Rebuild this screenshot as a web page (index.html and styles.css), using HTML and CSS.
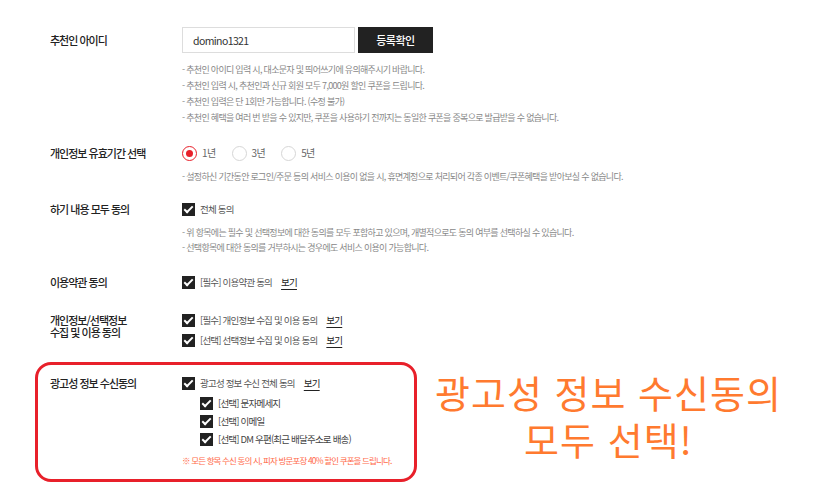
FILE: index.html
```html
<!DOCTYPE html>
<html lang="ko">
<head>
    <meta charset="UTF-8">
    <meta name="viewport" content="width=device-width, initial-scale=1.0">
    <title>회원가입 - 약관 동의</title>
    <link rel="stylesheet" href="styles.css">
</head>
<body>

<div class="join-form">

    <!-- 추천인 -->
    <div class="row row-recommend">
        <div class="row-label">추천인 아이디</div>
        <div class="row-body">
            <div class="id-check">
                <input type="text" class="input-box" value="domino1321">
                <button type="button" class="btn-dark">등록확인</button>
            </div>
            <ul class="notes">
                <li>- 추천인 아이디 입력 시, 대소문자 및 띄어쓰기에 유의해주시기 바랍니다.</li>
                <li>- 추천인 입력 시, 추천인과 신규 회원 모두 7,000원 할인 쿠폰을 드립니다.</li>
                <li>- 추천인 입력은 단 1회만 가능합니다. (수정 불가)</li>
                <li>- 추천인 혜택을 여러 번 받을 수 있지만, 쿠폰을 사용하기 전까지는 동일한 쿠폰을 중복으로 발급받을 수 없습니다.</li>
            </ul>
        </div>
    </div>

    <!-- 유효기간 -->
    <div class="row row-period">
        <div class="row-label">개인정보 유효기간 선택</div>
        <div class="row-body">
            <div class="radio-group">
                <label class="radio"><span class="radio-mark on"></span>1년</label>
                <label class="radio"><span class="radio-mark"></span>3년</label>
                <label class="radio"><span class="radio-mark"></span>5년</label>
            </div>
            <ul class="notes notes-tight">
                <li>- 설정하신 기간동안 로그인/주문 등의 서비스 이용이 없을 시, 휴면계정으로 처리되어 각종 이벤트/쿠폰혜택을 받아보실 수 없습니다.</li>
            </ul>
        </div>
    </div>

    <!-- 전체 동의 -->
    <div class="row row-all">
        <div class="row-label">하기 내용 모두 동의</div>
        <div class="row-body">
            <label class="check"><span class="check-mark"></span>전체 동의</label>
            <ul class="notes notes-tight">
                <li>- 위 항목에는 필수 및 선택정보에 대한 동의를 모두 포함하고 있으며, 개별적으로도 동의 여부를 선택하실 수 있습니다.</li>
                <li>- 선택항목에 대한 동의를 거부하시는 경우에도 서비스 이용이 가능합니다.</li>
            </ul>
        </div>
    </div>

    <!-- 이용약관 -->
    <div class="row row-terms">
        <div class="row-label">이용약관 동의</div>
        <div class="row-body">
            <label class="check"><span class="check-mark"></span>[필수] 이용약관 동의<a href="#" class="view">보기</a></label>
        </div>
    </div>

    <!-- 개인정보 -->
    <div class="row row-privacy">
        <div class="row-label two-line">개인정보/선택정보<br>수집 및 이용 동의</div>
        <div class="row-body">
            <label class="check"><span class="check-mark"></span>[필수] 개인정보 수집 및 이용 동의<a href="#" class="view">보기</a></label>
            <label class="check"><span class="check-mark"></span>[선택] 선택정보 수집 및 이용 동의<a href="#" class="view">보기</a></label>
        </div>
    </div>

    <!-- 광고성 정보 -->
    <div class="ad-wrap">
        <div class="ad-box">
            <div class="row row-ad">
                <div class="row-label">광고성 정보 수신동의</div>
                <div class="row-body">
                    <label class="check"><span class="check-mark"></span>광고성 정보 수신 전체 동의<a href="#" class="view">보기</a></label>
                    <div class="sub-checks">
                        <label class="check sub"><span class="check-mark"></span>[선택] 문자메세지</label>
                        <label class="check sub"><span class="check-mark"></span>[선택] 이메일</label>
                        <label class="check sub"><span class="check-mark"></span>[선택] DM 우편(최근 배달주소로 배송)</label>
                    </div>
                    <p class="coupon-note">※ 모든 항목 수신 동의 시, 피자 방문포장 40% 할인 쿠폰을 드립니다.</p>
                </div>
            </div>
        </div>
        <div class="callout">
            <span class="callout-line">광고성 정보 수신동의</span>
            <span class="callout-line">모두 선택!</span>
        </div>
    </div>

</div>

</body>
</html>
```

FILE: styles.css
```css
body {
    margin: 0;
    padding: 0;
    background: #fff;
    font-family: "Noto Sans CJK KR", "Noto Sans", sans-serif;
    color: #333;
}

.join-form {
    padding: 27px 0 0 50px;
}

/* 한 줄(라벨 + 내용) */
.row {
    display: flex;
    margin-bottom: 18px;
}

.row-label {
    width: 132px;
    flex-shrink: 0;
    font-size: 11px;
    line-height: 18px;
    letter-spacing: -1px;
    color: #222;
    font-weight: 500;
}

.row-label.two-line {
    line-height: 12px;
    padding-top: 3px;
}

.row-recommend .row-label {
    padding-top: 4px;
}

.row-body {
    flex: 1;
}

/* 추천인 입력 */
.id-check {
    display: flex;
    gap: 3px;
}

.input-box {
    width: 173px;
    height: 26px;
    box-sizing: border-box;
    border: 1px solid #ddd;
    padding: 0 10px;
    font-family: inherit;
    font-size: 10.5px;
    letter-spacing: -0.6px;
    color: #333;
    outline: none;
}

.btn-dark {
    width: 75px;
    height: 26px;
    border: none;
    background: #222;
    color: #fff;
    font-family: inherit;
    font-size: 11px;
    letter-spacing: -0.5px;
    font-weight: 500;
    cursor: pointer;
}

/* 안내 문구 */
.notes {
    list-style: none;
    margin: 9px 0 0;
    padding: 0;
    font-size: 9px;
    line-height: 16px;
    color: #888;
    letter-spacing: -0.7px;
}

.notes-tight {
    margin-top: 7px;
    line-height: 15px;
}

.row-period {
    margin-bottom: 16px;
}

.row-privacy {
    margin-bottom: 11px;
}

/* 라디오 */
.radio-group {
    display: flex;
    gap: 16px;
}

.radio {
    display: flex;
    align-items: center;
    gap: 5px;
    font-size: 10px;
    line-height: 18px;
    letter-spacing: -0.6px;
    color: #666;
}

.radio-mark {
    width: 15px;
    height: 15px;
    box-sizing: border-box;
    border: 1px solid #d6d6d6;
    border-radius: 50%;
    position: relative;
}

.radio-mark.on {
    border-color: #e8202a;
}

.radio-mark.on::after {
    content: "";
    position: absolute;
    left: 3px;
    top: 3px;
    width: 7px;
    height: 7px;
    border-radius: 50%;
    background: #e8202a;
}

/* 체크박스 */
.check {
    display: flex;
    align-items: center;
    font-size: 9.5px;
    line-height: 18px;
    letter-spacing: -0.8px;
    color: #555;
    margin-bottom: 2px;
}

.check-mark {
    width: 13px;
    height: 13px;
    background: #222;
    margin-right: 5px;
    position: relative;
    flex-shrink: 0;
}

.check-mark::after {
    content: "";
    position: absolute;
    left: 4px;
    top: 1px;
    width: 3px;
    height: 7px;
    border: solid #fff;
    border-width: 0 2px 2px 0;
    transform: rotate(45deg);
}

.view {
    margin-left: 9px;
    color: #222;
    text-decoration: underline;
    text-underline-offset: 3px;
}

.sub-checks {
    margin: 1px 0 0 18px;
}

.check.sub {
    margin-bottom: 0;
    color: #444;
}

.coupon-note {
    margin: 5px 0 0;
    font-size: 8.5px;
    line-height: 14px;
    color: #ff6b4a;
    letter-spacing: -0.85px;
}

/* 광고성 정보 강조 박스 */
.ad-wrap {
    display: flex;
    align-items: flex-start;
    margin-left: -15px;
}

.ad-box {
    width: 382px;
    height: 120px;
    box-sizing: border-box;
    border: 3px solid #e8202a;
    border-radius: 16px;
    padding: 9px 0 0 12px;
}

.ad-box .row {
    margin-bottom: 0;
}

.callout {
    flex: 1;
    padding: 10px 16px 0 0;
    text-align: center;
    font-size: 38px;
    line-height: 40px;
    letter-spacing: 1px;
    color: #ff7a2f;
}

.callout-line {
    display: block;
    margin-bottom: 7px;
}
```
